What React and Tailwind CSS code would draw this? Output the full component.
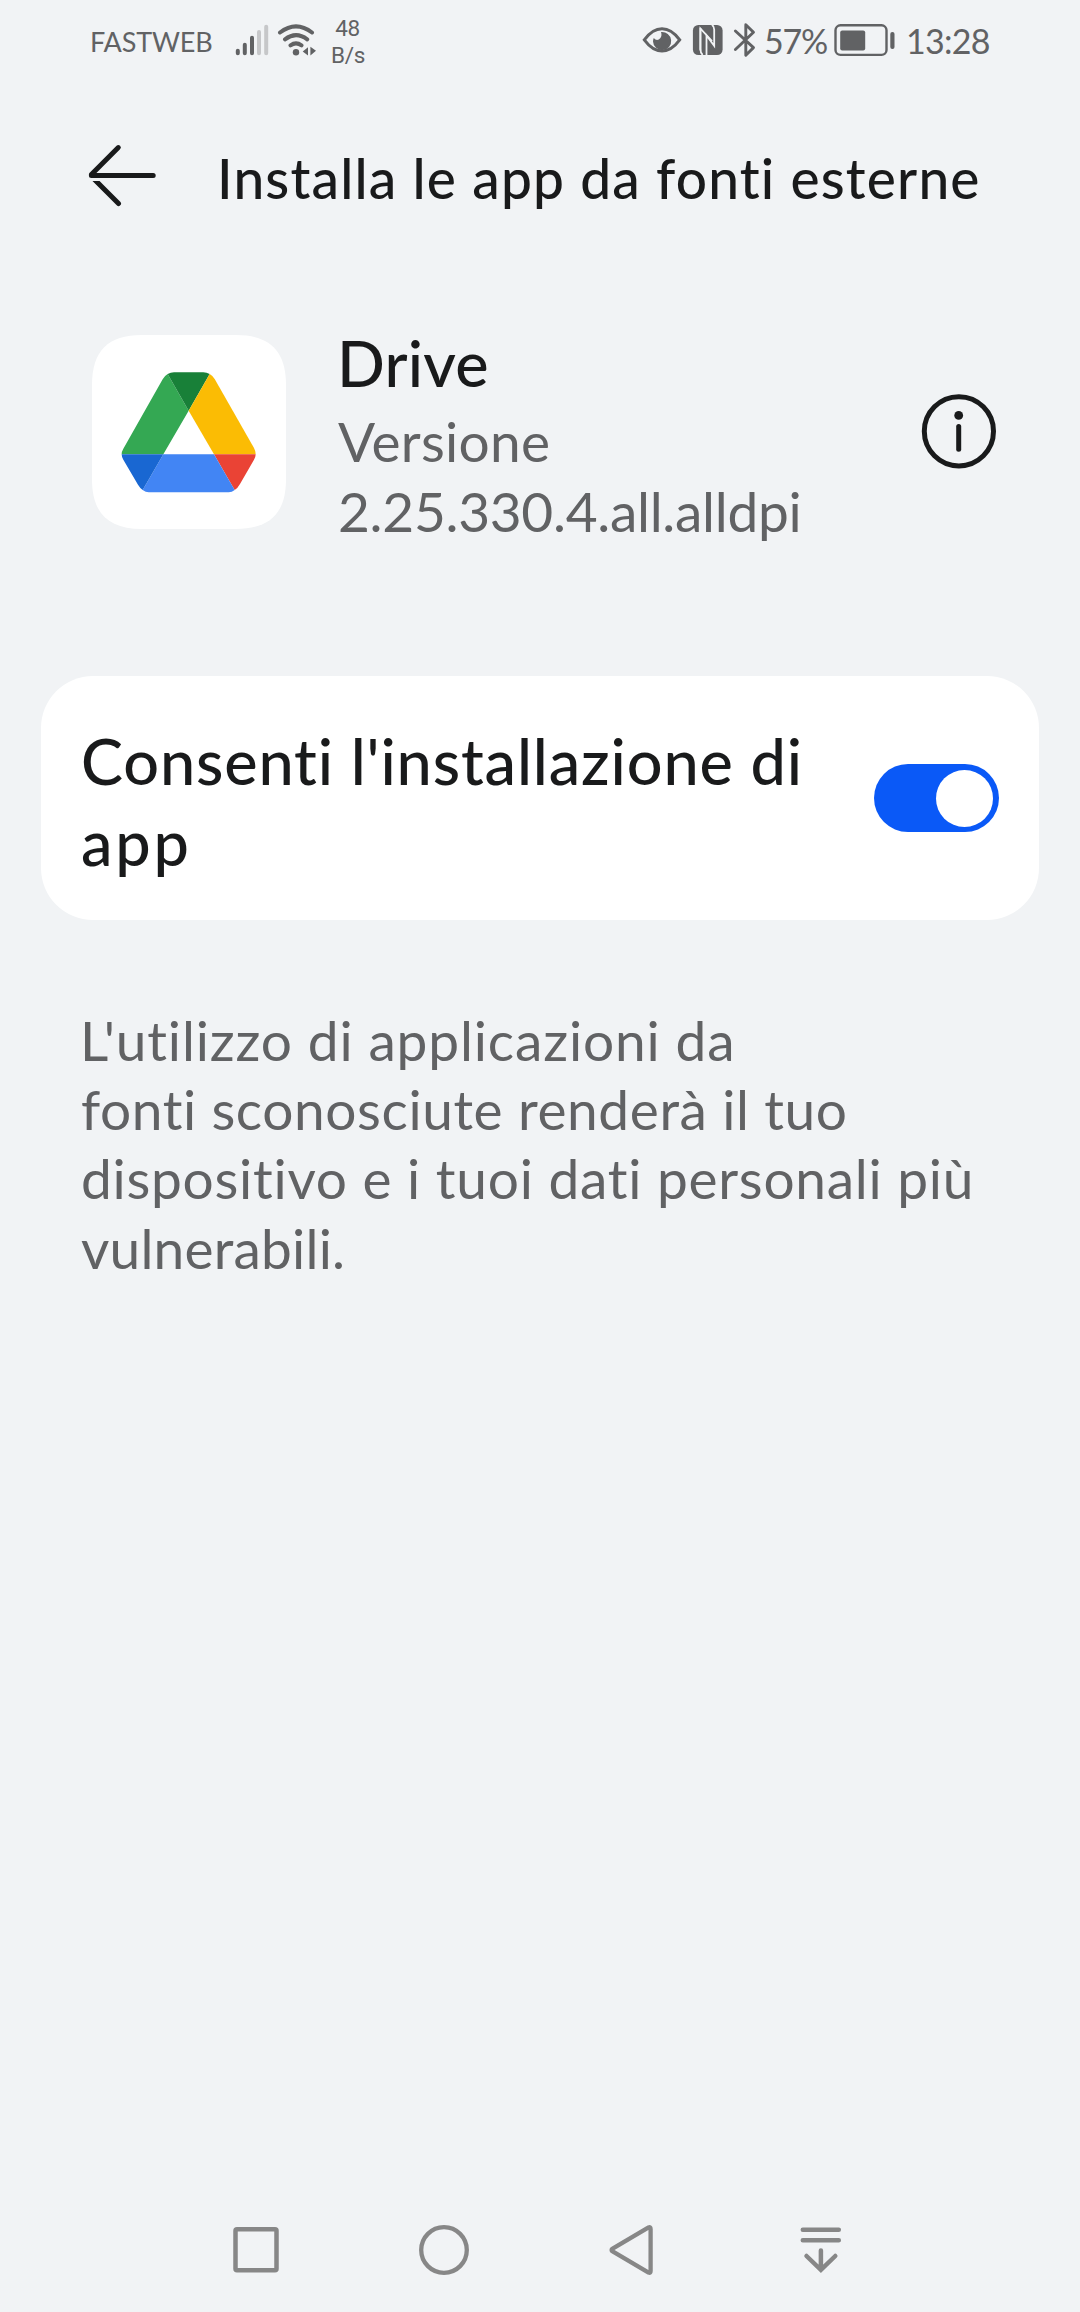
import React from 'react';

function SignalIcon() {
  return (
    <svg className="ml-[23px] mt-[23px] h-[34px] w-[34px]" viewBox="235 23 34 34" strokeWidth="4" strokeLinecap="round" stroke="#616264">
      <path d="M237.8 50.8V53.3M244.8 44.8V53.3M252 37.8V53.3" />
      <path d="M259 32V53.3M266.2 26.7V53.3" stroke="#c6c7c9" />
    </svg>
  );
}

function WifiIcon() {
  return (
    <svg className="ml-[7px] mt-[22px] h-[36px] w-[42px]" viewBox="276 22 42 36" fill="none" stroke="#616264" strokeWidth="4" strokeLinecap="round">
      <path d="M280 32.5Q296 20.3 312 32.5M285 39.3Q296 31 307.2 39.3M290.5 45.3Q296 41.5 301.5 45.3" />
      <g fill="#616264" stroke="none">
        <circle cx="296" cy="52.2" r="3.2" />
        <path d="M302.7 51.5L308 47.3V55.6ZM310.4 46.8L316 50.8L310.4 55.6Z" />
      </g>
    </svg>
  );
}

function EyeIcon() {
  return (
    <svg className="mt-[24px] h-[32px] w-[42px]" viewBox="641 24 42 32" fill="none">
      <path d="M644.3 39.8Q652.5 28.7 662 28.7T679.7 39.8Q671.5 50.9 662 50.9T644.3 39.8Z" stroke="#616264" strokeWidth="3" />
      <path d="M661 32A9.1 9.1 0 1 1 653 41.5Q653 39.5 653.8 38Q656 40.8 658.8 39.5Q662.8 37 661 32Z" fill="#616264" />
    </svg>
  );
}

function NfcIcon() {
  return (
    <svg className="ml-[9px] mt-[24px] h-[32px] w-[32px]" viewBox="691.8 24 32 32" fill="none" stroke="#f1f3f5">
      <rect x="692.7" y="25" width="29.7" height="30" rx="5.5" fill="#616264" stroke="none" />
      <path d="M700.2 50.5V28.5L711.8 41.2" strokeWidth="1.8" />
      <path d="M706.3 55V35.5L714 45.8V29.5Q714 26.5 711.8 24.7" strokeWidth="1.8" />
      <path d="M700.2 28V49Q700.2 53 702.5 55" strokeWidth="1.8" />
    </svg>
  );
}

function BluetoothIcon() {
  return (
    <svg className="ml-[9px] mt-[22px] h-[36px] w-[24px]" viewBox="732.8 22 24 36" fill="none" stroke="#616264" strokeWidth="2.9" strokeLinecap="round" strokeLinejoin="round">
      <path d="M735.2 31L753.3 47.6L745.6 55.2V24.8L753.3 32.3L735.2 49.5" />
    </svg>
  );
}

function BatteryIcon() {
  return (
    <svg className="mt-[23px] h-[35px] w-[63px]" viewBox="833 23 63 35" fill="none">
      <rect x="835.5" y="25.3" width="51" height="29.6" rx="5" stroke="#616264" strokeWidth="2.4" />
      <rect x="840.2" y="30.6" width="25" height="20" rx="2" fill="#616264" />
      <rect x="890.3" y="32" width="4.2" height="17" rx="2" fill="#616264" />
    </svg>
  );
}

function StatusBar() {
  return (
    <div className="flex h-[80px] items-start text-[#616264]">
      <div className="ml-[90px] mt-[26px] w-[122px] whitespace-nowrap text-[27px] leading-[32px] tracking-[-0.15px]">FASTWEB</div>
      <SignalIcon />
      <WifiIcon />
      <div className="ml-[12px] mt-[15px] w-[37px] text-center font-[Roboto,sans-serif] text-[22.5px] leading-[27px]">
        <div className="-ml-[2px] tracking-[-0.3px]">48</div>
        <div className="-ml-px tracking-[-0.3px]">B/s</div>
      </div>
      <div className="flex-1" />
      <EyeIcon />
      <NfcIcon />
      <BluetoothIcon />
      <div className="ml-[7px] mt-[21px] w-[69px] whitespace-nowrap text-[34px] leading-[40px] tracking-[-1.2px]">57%</div>
      <BatteryIcon />
      <div className="ml-[10px] mr-[87px] mt-[21px] w-[87px] whitespace-nowrap text-[34px] leading-[40px] tracking-[-0.7px]">13:28</div>
    </div>
  );
}

function BackIcon() {
  return (
    <svg className="ml-[85px] mt-[62px] h-[68px] w-[76px]" viewBox="85 142 76 68" fill="none" stroke="#191a1b" strokeWidth="5" strokeLinecap="round" strokeLinejoin="round">
      <defs>
        <clipPath id="lower-arm">
          <rect x="85" y="181" width="76" height="30" />
        </clipPath>
      </defs>
      <path d="M118.3 147.6L91.4 174.4V175.4H153.2" />
      <path d="M91 176L118.5 203.5" clipPath="url(#lower-arm)" />
    </svg>
  );
}

function DriveIcon() {
  return (
    <svg className="mt-[10px] h-[194px] w-[194px] shrink-0" viewBox="36 43 582 582">
      <path d="M186 43H467C570 43 618 91 618 193V475C618 577 570 625 467 625H186C84 625 36 577 36 475V193C36 91 84 43 186 43Z" fill="#fff" />
      <path d="M263 160L326 270L250 401H125Q125 392 130 384L248 176Q254 165 263 160Z" fill="#34a853" />
      <path d="M263 160Q272 155 282 155H370Q380 155 389 160L326 270Z" fill="#188038" />
      <path d="M389 160Q398 165 404 175L522 382Q527 391 527 401H402L326 270Z" fill="#fbbc04" />
      <path d="M402 401H527Q527 409 522 417L480 490Q473 503 464 508Z" fill="#ea4335" />
      <path d="M250 401H402L464 508Q456 515 446 515H206Q197 515 188 508Z" fill="#4285f4" />
      <path d="M125 401H250L188 508Q180 502 174 492L130 417Q125 409 125 401Z" fill="#1967d2" />
    </svg>
  );
}

function InfoIcon() {
  return (
    <svg className="ml-auto mr-[82.5px] mt-[67.5px] h-[78px] w-[78px] shrink-0" viewBox="919.7 392 78 78" fill="none" stroke="#191a1b" strokeWidth="5">
      <circle cx="958.6" cy="431.3" r="34.6" />
      <circle cx="958.4" cy="415.4" r="4.4" fill="#191a1b" stroke="none" />
      <path d="M958.4 426.5V449.2" strokeLinecap="round" />
    </svg>
  );
}

function NavBar() {
  return (
    <div className="flex h-[124px] items-center">
      <svg className="ml-[226px] size-[60px]" viewBox="226 2220 60 60" fill="none" stroke="#878787" strokeWidth="4.5">
        <rect x="235.5" y="2229.3" width="41" height="41" rx="1.5" />
      </svg>
      <svg className="ml-[128px] size-[60px]" viewBox="414 2220 60 60" fill="none" stroke="#878787" strokeWidth="4.3">
        <circle cx="444" cy="2250" r="22.8" />
      </svg>
      <svg className="ml-[127px] size-[60px]" viewBox="601 2220 60 60" fill="none" stroke="#878787" strokeWidth="4.3" strokeLinejoin="round">
        <path d="M612.2 2248.8L648.6 2227.4Q650.6 2226.6 650.6 2229V2271Q650.6 2273.4 648.6 2272.6L612.2 2251.2Q611 2250 612.2 2248.8Z" />
      </svg>
      <svg className="ml-[130px] size-[60px]" viewBox="791 2220 60 60" fill="none" stroke="#878787" strokeWidth="4.5" strokeLinecap="round">
        <path d="M802.8 2229.8H838.8M802.8 2240.3H838.8M820.9 2250.5V2269M806.5 2256L820.9 2269.8L835.3 2256" />
      </svg>
    </div>
  );
}

export default function App() {
  return (
    <div className="flex h-[2312px] w-[1080px] flex-col overflow-hidden bg-[#f1f3f5] font-[Lato,sans-serif] text-[#191a1b]">
      <StatusBar />

      <header className="flex h-[244.5px] items-start">
        <BackIcon />
        <h1 className="ml-[56px] mt-[65px] whitespace-nowrap text-[55px] font-medium leading-[66px] tracking-[1.18px]">Installa le app da fonti esterne</h1>
      </header>

      <section className="flex h-[351.5px] items-start pl-[92px]">
        <DriveIcon />
        <div className="ml-[51px] mt-[0.5px] whitespace-nowrap">
          <div className="h-[81px] text-[63px] font-medium leading-[76px] tracking-[0.2px]">Drive</div>
          <div className="ml-px text-[55px] leading-[70px] text-[#616264]">
            <div className="tracking-[0.3px]">Versione</div>
            <div className="tracking-[-0.3px]">2.25.330.4.all.alldpi</div>
          </div>
        </div>
        <InfoIcon />
      </section>

      <section className="mx-[41px] flex h-[244px] items-center rounded-[52px] bg-white pl-[40px] pr-[40px]">
        <div className="mt-[5px] flex-1 whitespace-nowrap text-[63px] font-medium leading-[81px]">
          <div className="tracking-[0.85px]">Consenti l'installazione di</div>
          <div className="tracking-[2.8px]">app</div>
        </div>
        <div className="flex h-[68px] w-[125px] items-center justify-end rounded-full bg-[#0a59f7] pr-[6.5px]">
          <div className="size-[57px] rounded-full bg-white" />
        </div>
      </section>

      <p className="ml-[81px] mt-[86px] flex-1 whitespace-nowrap text-[55px] leading-[69.2px] text-[#616264]">
        <span className="-ml-px block tracking-[0.86px]">L'utilizzo di applicazioni da</span>
        <span className="block tracking-[0.6px]">fonti sconosciute renderà il tuo</span>
        <span className="block tracking-[0.74px]">dispositivo e i tuoi dati personali più</span>
        <span className="block tracking-[0.2px]">vulnerabili.</span>
      </p>

      <NavBar />
    </div>
  );
}
